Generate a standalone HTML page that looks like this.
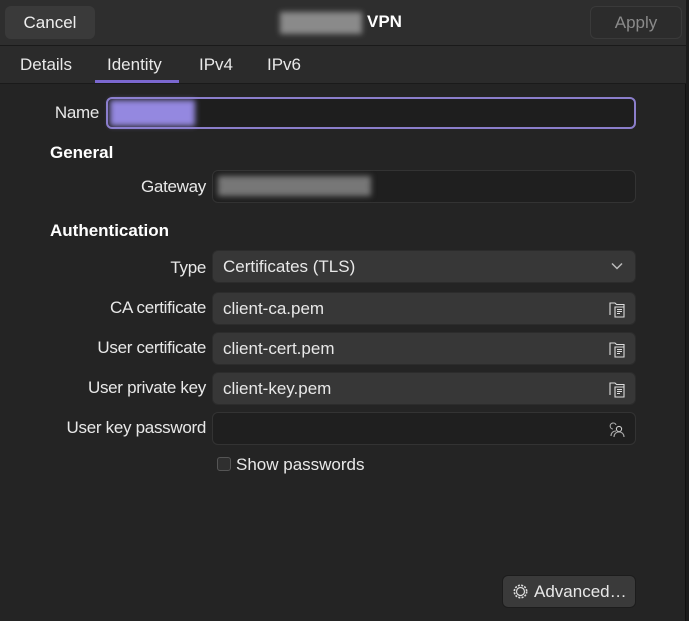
<!DOCTYPE html>
<html><head><style>
*{box-sizing:border-box;margin:0;padding:0}
body{width:689px;height:621px;background:#1b1b1b;font-family:"Liberation Sans",sans-serif;color:#e8e8e8;font-size:17px;position:relative;overflow:hidden}
.win{position:absolute;left:0;top:0;width:686px;height:621px;background:#242424;border-right:1px solid #111}
.hdr{position:absolute;left:0;top:0;width:686px;height:46px;background:#2e2e2e;border-bottom:1px solid #1a1a1a}
.btn{position:absolute;border-radius:6px;background:#3a3a3a;display:flex;align-items:center;justify-content:center}
.tabs{position:absolute;left:0;top:46px;width:686px;height:38px;background:#2b2b2b;border-bottom:1px solid #1a1a1a}
.tab{position:absolute;top:9px}
.a{position:absolute}
.lbl{position:absolute;text-align:right;width:200px;letter-spacing:-0.3px}
.f{position:absolute;left:212px;width:424px;height:33px;border-radius:6px;background:#373737;border:1px solid #2c2c2c;padding-left:10px;line-height:31px}
.d{background:#1f1f1f;border:1px solid #333}
.blur{position:absolute;filter:blur(3px)}
.ic{position:absolute;right:9px;top:8px}
</style></head><body>
<div class="win">
<div class="hdr">
 <div class="btn" style="left:5px;top:6px;width:90px;height:33px;color:#eee">Cancel</div>
 <div class="blur" style="left:280px;top:12px;width:82px;height:22px;background:#8a8a8a"></div>
 <div class="a" style="left:367px;top:12px;font-weight:bold;color:#fff">VPN</div>
 <div class="btn" style="left:590px;top:6px;width:92px;height:33px;background:#2c2c2c;border:1px solid #3a3a3a;color:#8a8a8a">Apply</div>
</div>
<div class="tabs">
 <div class="tab" style="left:20px">Details</div>
 <div class="tab" style="left:107px">Identity</div>
 <div class="tab" style="left:199px">IPv4</div>
 <div class="tab" style="left:267px">IPv6</div>
 <div class="a" style="left:95px;top:34px;width:84px;height:3px;background:#7b68d0"></div>
</div>
<div class="lbl" style="left:-101px;top:103px">Name</div>
<div class="a" style="left:106px;top:97px;width:530px;height:32px;border:2px solid #8b7ecb;border-radius:6px;background:#1e1e1e"></div>
<div class="blur" style="left:110px;top:100px;width:85px;height:26px;background:#9488e0"></div>
<div class="a" style="left:50px;top:143px;font-weight:bold;color:#fff">General</div>
<div class="lbl" style="left:6px;top:177px">Gateway</div>
<div class="f d" style="top:170px"></div>
<div class="blur" style="left:218px;top:176px;width:153px;height:20px;background:#777"></div>
<div class="a" style="left:50px;top:221px;font-weight:bold;color:#fff">Authentication</div>
<div class="lbl" style="left:6px;top:258px">Type</div>
<div class="f" style="top:250px">Certificates (TLS)<svg class="ic" style="top:11px;right:12px" width="12" height="8" viewBox="0 0 12 8"><path d="M1 1.5l5 5 5-5" fill="none" stroke="#bbb" stroke-width="1.5"/></svg></div>
<div class="lbl" style="left:6px;top:298px">CA certificate</div>
<div class="f" style="top:292px">client-ca.pem<svg class="ic" width="17" height="17" viewBox="0 0 17 17"><path d="M1 14V2h5l1.5 1.5H15v2M6 6h9v10H6zM8 8.5h5M8 10.5h5M8 12.5h3" fill="none" stroke="#ddd" stroke-width="1.1"/></svg></div>
<div class="lbl" style="left:6px;top:338px">User certificate</div>
<div class="f" style="top:332px">client-cert.pem<svg class="ic" width="17" height="17" viewBox="0 0 17 17"><path d="M1 14V2h5l1.5 1.5H15v2M6 6h9v10H6zM8 8.5h5M8 10.5h5M8 12.5h3" fill="none" stroke="#ddd" stroke-width="1.1"/></svg></div>
<div class="lbl" style="left:6px;top:378px">User private key</div>
<div class="f" style="top:372px">client-key.pem<svg class="ic" width="17" height="17" viewBox="0 0 17 17"><path d="M1 14V2h5l1.5 1.5H15v2M6 6h9v10H6zM8 8.5h5M8 10.5h5M8 12.5h3" fill="none" stroke="#ddd" stroke-width="1.1"/></svg></div>
<div class="lbl" style="left:6px;top:418px">User key password</div>
<div class="f d" style="top:412px"><svg class="ic" width="17" height="17" viewBox="0 0 17 17"><circle cx="10" cy="8" r="2.6" fill="none" stroke="#ccc" stroke-width="1.1"/><path d="M4 8a3 3 0 1 1 3-4M2 15c0-3 2-5 5-5M5 16c0-3 2-5 5-5s5 2 5 5" fill="none" stroke="#aaa" stroke-width="1.1"/></svg></div>
<div class="a" style="left:217px;top:457px;width:14px;height:14px;border:1px solid #555;border-radius:3px;background:#2f2f2f"></div>
<div class="a" style="left:236px;top:455px">Show passwords</div>
<div class="btn" style="left:502px;top:575px;width:134px;height:33px;border:1px solid #1c1c1c;justify-content:flex-start;padding-left:9px"><svg width="17" height="17" viewBox="0 0 17 17"><circle cx="8.5" cy="8.5" r="4" fill="none" stroke="#ddd" stroke-width="1.2"/><circle cx="8.5" cy="8.5" r="6.2" fill="none" stroke="#ddd" stroke-width="1.6" stroke-dasharray="2 1.3"/></svg><span style="margin-left:5px">Advanced…</span></div>
</div>
</body></html>
